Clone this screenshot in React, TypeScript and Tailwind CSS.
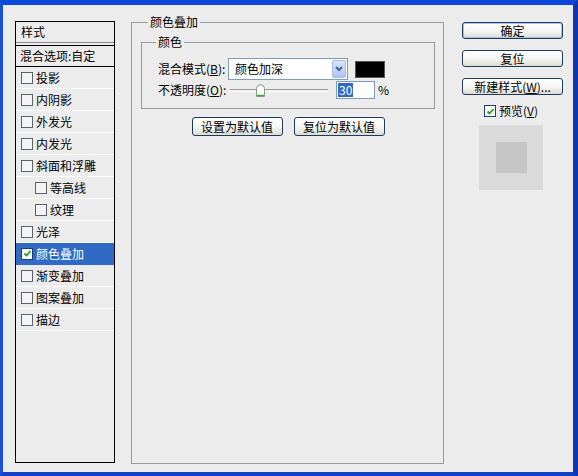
import React from "react";

const font = { fontFamily: '"Noto Sans CJK SC", "Liberation Sans", sans-serif' };

function Check({ checked, selected }: { checked?: boolean; selected?: boolean }) {
  return (
    <span
      className={`inline-flex items-center justify-center w-[12px] h-[12px] border ${
        selected ? "border-[#1c3f7a] bg-white" : "border-[#59636e] bg-[#f3f3f3]"
      } shrink-0`}
    >
      {checked && (
        <svg width="9" height="9" viewBox="0 0 9 9">
          <path d="M1.5 4.5 L3.5 6.5 L7.5 2" stroke="#21a121" strokeWidth="1.8" fill="none" />
        </svg>
      )}
    </span>
  );
}

const rows: { label: string; indent?: boolean; checked?: boolean; selected?: boolean }[] = [
  { label: "投影" },
  { label: "内阴影" },
  { label: "外发光" },
  { label: "内发光" },
  { label: "斜面和浮雕" },
  { label: "等高线", indent: true },
  { label: "纹理", indent: true },
  { label: "光泽" },
  { label: "颜色叠加", checked: true, selected: true },
  { label: "渐变叠加" },
  { label: "图案叠加" },
  { label: "描边" },
];

function XpButton({ children, w, h, def }: { children: React.ReactNode; w: string; h: string; def?: boolean }) {
  return (
    <div
      className={`${w} ${h} flex items-center justify-center rounded-[3px] border border-[#1f3a5f] bg-gradient-to-b from-white via-[#f6f6f3] to-[#dcdcd6] text-[12px] leading-none text-black ${
        def ? "shadow-[inset_0_0_0_1px_#a9c2ea]" : ""
      }`}
    >
      {children}
    </div>
  );
}

export default function App() {
  return (
    <div style={font} className="relative w-[578px] h-[476px] bg-[#ececec] border-t-[5px] border-l-[3px] border-r-[5px] border-b-[4px] border-t-[#0b47d9] border-l-[#1a4fd8] border-r-[#0d35b5] border-b-[#1240c8] text-[12px] text-black overflow-hidden">
      <div className="absolute -top-[5px] right-[2px] w-[19px] h-[4px] bg-[#d8552c] border border-t-0 border-[#f3d6c6] rounded-b-[2px]" />
      <div className="flex items-start">
        {/* Left list */}
        <div className="ml-[12px] mt-[16px] w-[100px] h-[442px] border border-black flex flex-col">
          <div className="h-[21px] flex items-center pl-[5px] border-b border-[#8a8a8a]">样式</div>
          <div className="h-[2px]" />
          <div className="h-[1px] bg-black" />
          <div className="h-[21px] flex items-center pl-[4px] border-b border-black">混合选项:自定</div>
          {rows.map((r) => (
            <div
              key={r.label}
              className={`h-[22px] flex items-center gap-[3px] border-b ${
                r.selected ? "bg-[#316ac5] text-white border-[#316ac5]" : "border-white"
              } ${r.indent ? "pl-[19px]" : "pl-[5px]"}`}
            >
              <Check checked={r.checked} selected={r.selected} />
              <span>{r.label}</span>
            </div>
          ))}
        </div>

        {/* Group */}
        <fieldset className="ml-[16px] mt-[10px] w-[313px] h-[449px] border border-[#9a9a9a] pl-[9px] pr-[8px]">
          <legend className="ml-[7px] px-[2px] h-[14px] leading-[14px]">颜色叠加</legend>
          <fieldset className="mt-[6px] w-[294px] h-[74px] border border-[#9a9a9a] pl-[16px]">
            <legend className="-ml-[2px] px-[2px] h-[14px] leading-[14px]">颜色</legend>
            <div className="mt-[9px] h-[22px] flex items-center">
              <span className="w-[70px]">
                混合模式(<span className="underline">B</span>):
              </span>
              <div className="w-[120px] h-[22px] border border-[#7f9db9] bg-white flex items-center">
                <span className="flex-1 pl-[6px]">颜色加深</span>
                <div className="w-[14px] h-[18px] mr-[1px] rounded-[2px] border border-[#a7bdea] bg-gradient-to-b from-[#d9e4fd] to-[#aec4f4] flex items-center justify-center">
                  <svg width="8" height="6" viewBox="0 0 8 6">
                    <path d="M1 1 L4 4 L7 1" stroke="#4d6185" strokeWidth="2" fill="none" />
                  </svg>
                </div>
              </div>
              <div className="ml-[7px] w-[30px] h-[17px] bg-black border border-[#555]" />
            </div>
            <div className="h-[20px] flex items-center">
              <span className="w-[72px]">
                不透明度(<span className="underline">O</span>):
              </span>
              <div className="relative w-[98px] h-[14px] flex items-center">
                <div className="w-full h-[3px] border-t border-[#9a9a9a] border-b border-b-white" />
                <svg className="absolute left-[26px] top-[1px]" width="9" height="13" viewBox="0 0 9 13">
                  <path d="M0.5 4.5 Q0.5 1 4.5 0.5 Q8.5 1 8.5 4.5 V12.5 H0.5 Z" fill="#fbfbfb" stroke="#8a9a8a" />
                  <path d="M1 11.5 H8" stroke="#3faa3f" strokeWidth="1.5" />
                </svg>
              </div>
              <div className="ml-[8px] w-[39px] h-[18px] border border-[#7f9db9] bg-white flex items-center pl-[1px]">
                <span className="bg-[#316ac5] text-white leading-[14px] px-[1px]">30</span>
              </div>
              <span className="ml-[3px]">%</span>
            </div>
          </fieldset>
          <div className="mt-[8px] flex justify-center gap-[11px]">
            <XpButton w="w-[91px]" h="h-[19px]">设置为默认值</XpButton>
            <XpButton w="w-[91px]" h="h-[19px]">复位为默认值</XpButton>
          </div>
        </fieldset>

        {/* Right column */}
        <div className="ml-[18px] mt-[17px] w-[101px] flex flex-col">
          <XpButton w="w-[101px]" h="h-[17px]" def>确定</XpButton>
          <div className="mt-[11px]">
            <XpButton w="w-[101px]" h="h-[17px]">复位</XpButton>
          </div>
          <div className="mt-[11px]">
            <XpButton w="w-[101px]" h="h-[17px]">
              新建样式(<span className="underline">W</span>)...
            </XpButton>
          </div>
          <div className="mt-[10px] h-[12px] flex items-center pl-[22px] gap-[3px]">
            <Check checked selected />
            <span>
              预览(<span className="underline">V</span>)
            </span>
          </div>
          <div className="mt-[8px] ml-[17px] w-[64px] h-[65px] bg-[#dadada] flex items-center justify-center">
            <div className="w-[31px] h-[31px] bg-[#c6c6c6]" />
          </div>
        </div>
      </div>
    </div>
  );
}
